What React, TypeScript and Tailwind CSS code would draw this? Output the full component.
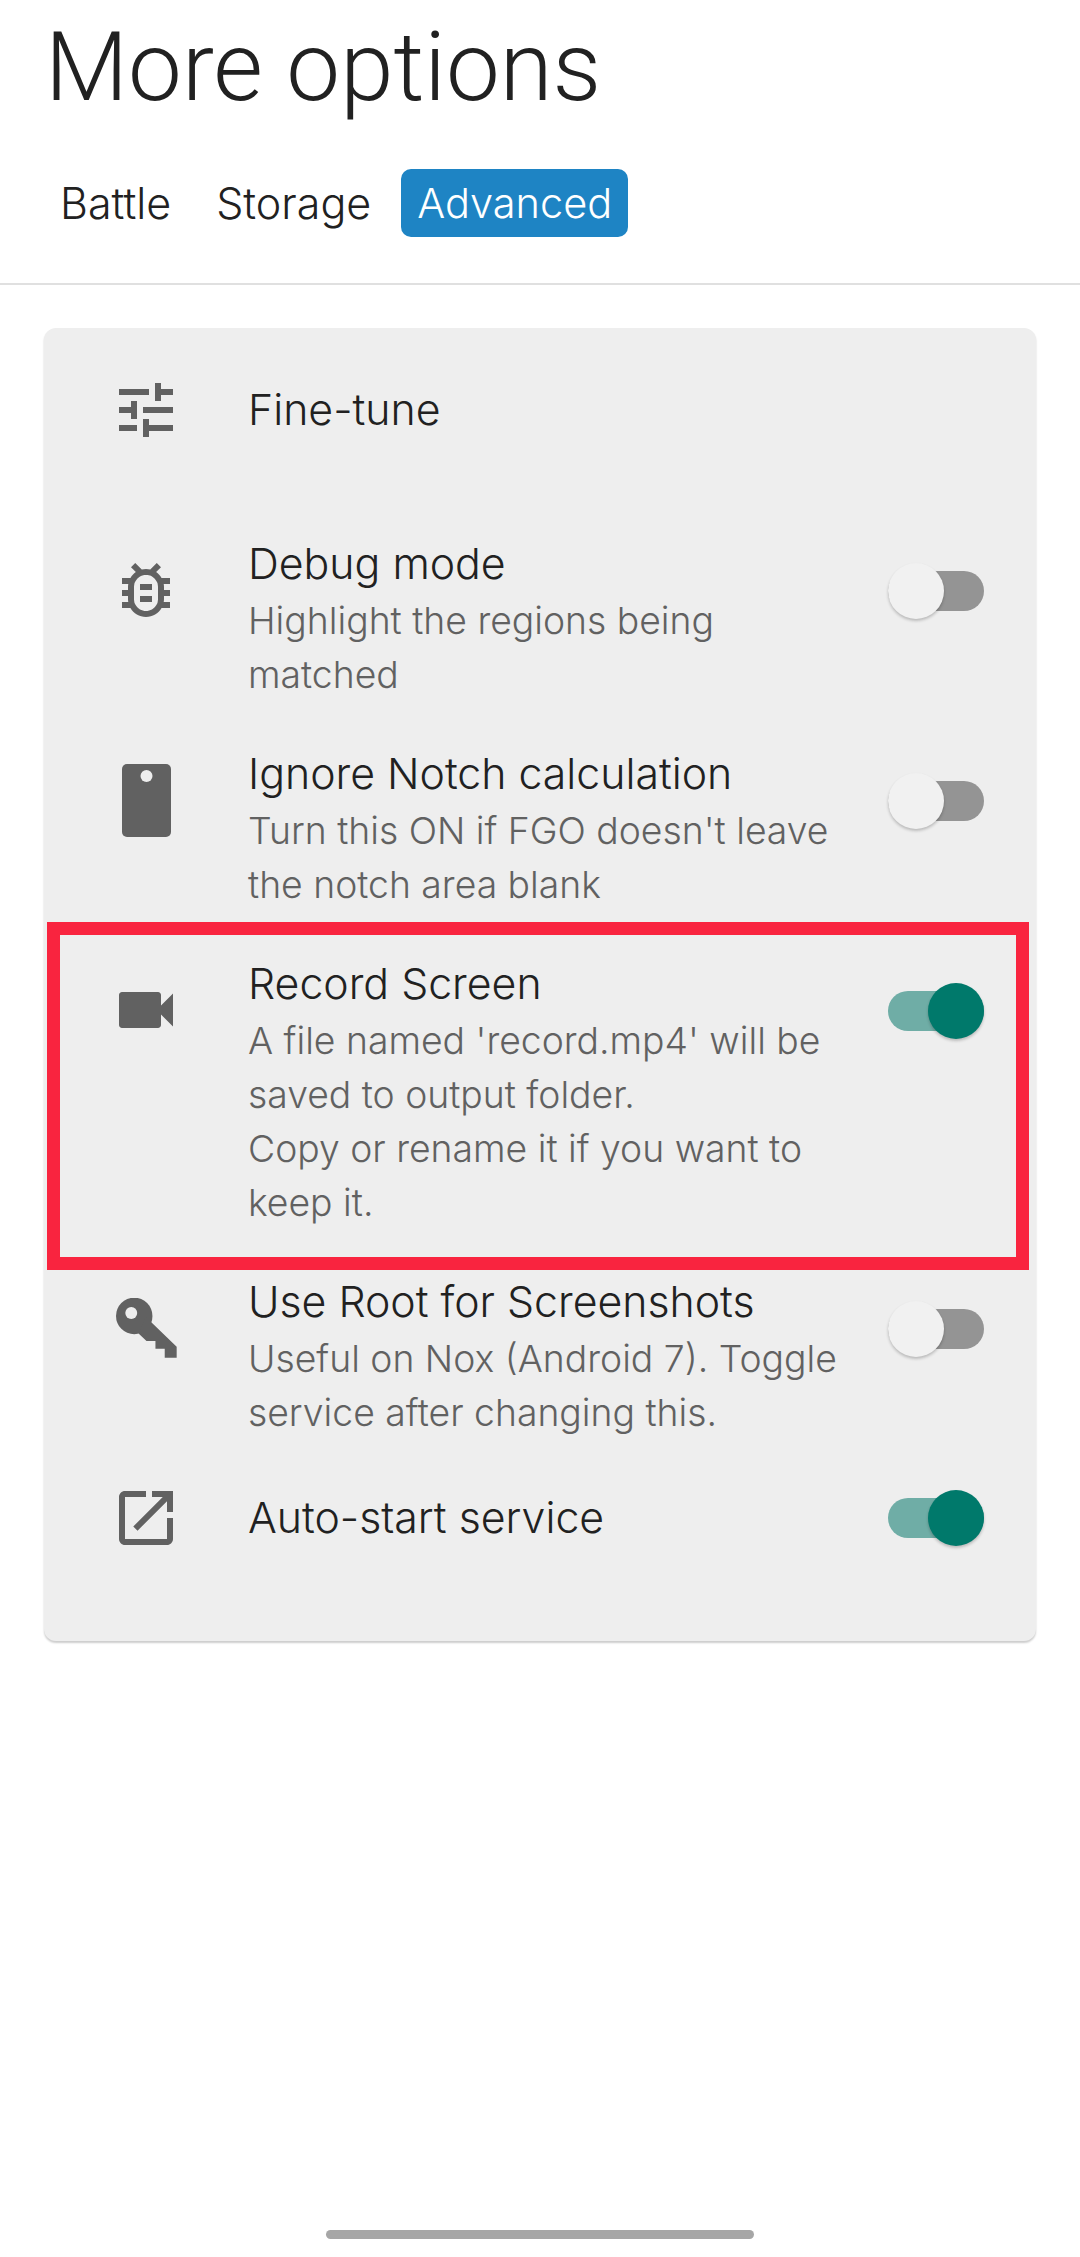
import type { ReactNode } from "react"

const font = "font-['Inter','Liberation_Sans',sans-serif]"

function Toggle({ on }: { on?: boolean }) {
  return (
    <div className="relative w-[96px] h-[56px] flex items-center">
      <div className={`w-full h-[40px] rounded-full ${on ? "bg-[#6fada6]" : "bg-[#949494]"}`} />
      <div
        className={`absolute top-0 w-[56px] h-[56px] rounded-full shadow-[0_2px_3px_rgba(0,0,0,0.22)] ${
          on ? "right-0 bg-[#00796b]" : "left-0 bg-[#f1f1f1]"
        }`}
      />
    </div>
  )
}

function MaterialIcon({ d }: { d: string }) {
  return (
    <svg width="72" height="72" viewBox="0 0 24 24" fill="#616161">
      <path d={d} />
    </svg>
  )
}

function NotchIcon() {
  return (
    <svg width="49" height="73" viewBox="0 0 49 73">
      <rect width="49" height="73" rx="5" fill="#616161" />
      <circle cx="24.5" cy="12" r="6" fill="#eeeeee" />
    </svg>
  )
}

function KeyIcon() {
  return (
    <svg width="61" height="60" viewBox="228 175 184 181">
      <circle cx="283" cy="229" r="55" fill="#616161" />
      <path d="M318 232L411 322V355H375V328H347V305H320L296 282Z" fill="#616161" />
      <circle cx="274" cy="220" r="18" fill="#eeeeee" />
    </svg>
  )
}

const icons = {
  tune: "M3 17v2h6v-2H3zM3 5v2h10V5H3zm10 16v-2h8v-2h-8v-2h-2v6h2zM7 9v2H3v2h4v2h2V9H7zm14 4v-2H11v2h10zm-6-4h2V7h4V5h-4V3h-2v6z",
  bug: "M20 8h-2.81c-.45-.78-1.07-1.45-1.82-1.96L17 4.41 15.59 3l-2.17 2.17C12.96 5.06 12.49 5 12 5s-.96.06-1.41.17L8.41 3 7 4.41l1.62 1.63C7.88 6.55 7.26 7.22 6.81 8H4v2h2.09c-.05.33-.09.66-.09 1v1H4v2h2v1c0 .34.04.67.09 1H4v2h2.81c1.04 1.79 2.97 3 5.19 3s4.15-1.21 5.19-3H20v-2h-2.09c.05-.33.09-.66.09-1v-1h2v-2h-2v-1c0-.34-.04-.67-.09-1H20V8zm-4 4v3c0 .22-.03.47-.07.7l-.1.65-.37.65c-.72 1.24-2.04 2-3.46 2s-2.74-.77-3.46-2l-.37-.64-.1-.65C8.03 15.48 8 15.23 8 15v-4c0-.23.03-.48.07-.7l.1-.65.37-.65c.3-.52.72-.97 1.21-1.31l.57-.39.74-.18c.31-.08.63-.12.94-.12.32 0 .63.04.95.12l.68.16.61.42c.5.34.91.78 1.21 1.31l.38.65.1.65c.04.22.07.47.07.69v1zm-6 2h4v2h-4zm0-4h4v2h-4z",
  video: "M17 10.5V7c0-.55-.45-1-1-1H4c-.55 0-1 .45-1 1v10c0 .55.45 1 1 1h12c.55 0 1-.45 1-1v-3.5l4 4v-11l-4 4z",
  open: "M19 19H5V5h7V3H5c-1.11 0-2 .9-2 2v14c0 1.1.89 2 2 2h14c1.1 0 2-.9 2-2v-7h-2v7zM14 3v2h3.59l-9.83 9.83 1.41 1.41L19 6.41V10h2V3h-7z",
}

function Row({
  icon,
  title,
  lines,
  on,
}: {
  icon: ReactNode
  title: string
  lines: string[]
  on?: boolean
}) {
  return (
    <div className="flex items-start pt-[24px] pb-[20px]">
      <div className="w-[204px] h-[108px] shrink-0 flex items-center justify-center">{icon}</div>
      <div className="flex-1">
        <div className="text-[42.8px] leading-[56px] mb-[2px] font-light text-[#212121]">{title}</div>
        {lines.map((line) => (
          <div key={line} className="text-[37.3px] leading-[54px] font-light text-[#616161]">
            {line}
          </div>
        ))}
      </div>
      <div className="mt-[27px] mr-[52px]">
        <Toggle on={on} />
      </div>
    </div>
  )
}

export default function App() {
  return (
    <div className={`relative w-[1080px] h-[2257px] bg-white overflow-hidden ${font}`}>
      <header className="h-[285px] border-b-[2px] border-[#e0e0e0]">
        <h1 className="pl-[45px] pt-[7px] h-[169px] font-['Roboto',sans-serif] text-[96px] leading-[120px] font-light text-[#212121]">
          More options
        </h1>
        <nav className="flex items-center pl-[45px] gap-[15px] text-[43px] font-light text-[#212121]">
          <span className="px-[15px] h-[68px] leading-[68px]">Battle</span>
          <span className="px-[15px] h-[68px] leading-[68px]">Storage</span>
          <span className="px-[16px] h-[68px] text-[41.5px] leading-[68px] rounded-[10px] bg-[#1e84c4] text-white">
            Advanced
          </span>
        </nav>
      </header>

      <section className="mx-[44px] mt-[43px] rounded-[12px] bg-[#eeeeee] pt-[24px] pb-[65px] shadow-[0_2px_2px_rgba(0,0,0,0.2)]">
        <div className="flex items-center h-[116px] mb-[44px]">
          <div className="w-[204px] flex justify-center">
            <MaterialIcon d={icons.tune} />
          </div>
          <div className="text-[42.8px] font-light text-[#212121]">Fine-tune</div>
        </div>
        <Row
          icon={<MaterialIcon d={icons.bug} />}
          title="Debug mode"
          lines={["Highlight the regions being", "matched"]}
        />
        <Row
          icon={<NotchIcon />}
          title="Ignore Notch calculation"
          lines={["Turn this ON if FGO doesn't leave", "the notch area blank"]}
        />
        <div className="relative">
          <Row
            icon={<MaterialIcon d={icons.video} />}
            title="Record Screen"
            lines={[
              "A file named 'record.mp4' will be",
              "saved to output folder.",
              "Copy or rename it if you want to",
              "keep it.",
            ]}
            on
          />
          <div className="absolute -top-[10px] -bottom-[20px] left-[3px] right-[7px] border-[13px] border-[#f9243f]" />
        </div>
        <Row
          icon={<KeyIcon />}
          title="Use Root for Screenshots"
          lines={["Useful on Nox (Android 7). Toggle", "service after changing this."]}
        />
        <div className="flex items-center h-[116px]">
          <div className="w-[204px] flex justify-center">
            <MaterialIcon d={icons.open} />
          </div>
          <div className="flex-1 text-[42.8px] font-light text-[#212121]">Auto-start service</div>
          <div className="mr-[52px]">
            <Toggle on />
          </div>
        </div>
      </section>

      <div className="absolute left-[326px] bottom-[18px] w-[428px] h-[9px] rounded-full bg-[#a6a6a6]" />
    </div>
  )
}
